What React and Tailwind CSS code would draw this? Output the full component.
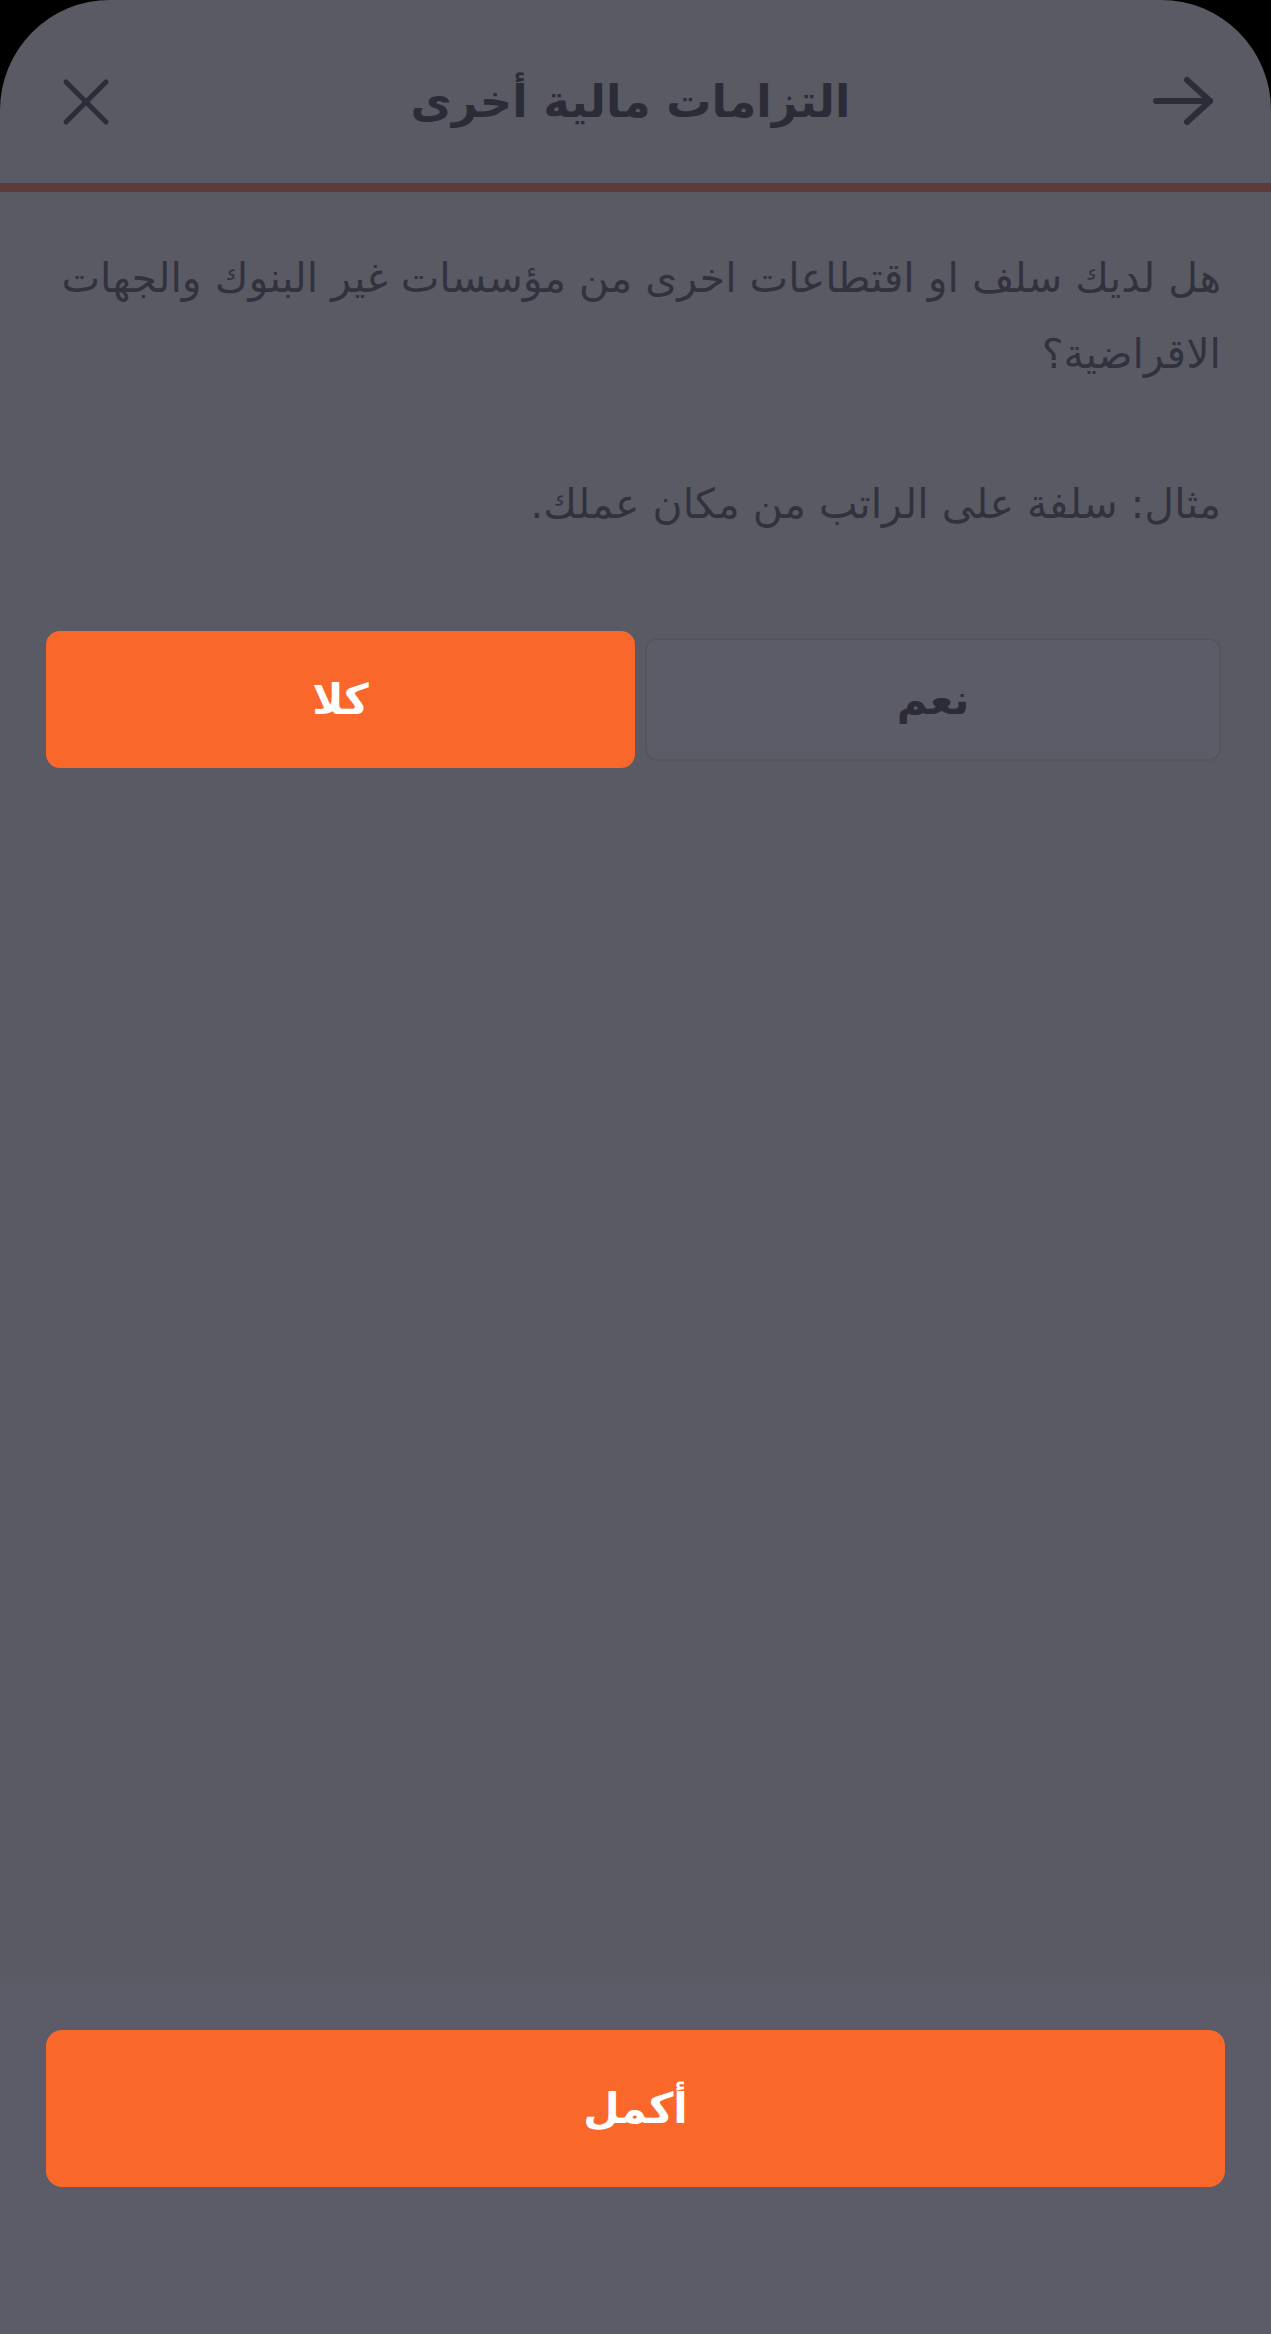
import React, { useState } from "react";

const font = { fontFamily: '"DejaVu Sans", "Noto Sans", sans-serif' };

const ArrowIcon = () => (
  <svg width="64" height="52" viewBox="0 0 64 52" fill="none" stroke="#2d2d39" strokeWidth="6" strokeLinecap="round" strokeLinejoin="round">
    <path d="M5 25h54" />
    <path d="M36 4l23 21-23 21" />
  </svg>
);

const CloseIcon = () => (
  <svg width="48" height="48" viewBox="0 0 48 48" fill="none" stroke="#2d2d39" strokeWidth="5" strokeLinecap="round">
    <path d="M4 4l40 40" />
    <path d="M44 4L4 44" />
  </svg>
);

const App = () => {
  const [answer, setAnswer] = useState("no");

  const selected = "h-[137px] rounded-[14px] bg-[#f9672a] text-white text-[42px] font-bold";
  const idle = "h-[123px] rounded-[12px] bg-[#5c5c68] border-2 border-[#55555f] text-[#2c2c38] text-[42px] font-bold";

  return (
    <div dir="rtl" className="w-full min-h-[2334px] bg-black" style={font}>
      <div className="h-[2334px] bg-[#5a5a65] rounded-t-[110px] flex flex-col overflow-hidden">
        <header className="h-[183px] pt-[20px] pr-[56px] pl-[62px] flex items-center justify-between">
          <button className="w-[64px] h-[52px] flex items-center justify-center">
            <ArrowIcon />
          </button>
          <h1 className="text-[45px] font-bold text-[#2c2c38]">التزامات مالية أخرى</h1>
          <button className="w-[48px] h-[48px] flex items-center justify-center">
            <CloseIcon />
          </button>
        </header>
        <div className="h-[9px] bg-[#5c3b3a]" />

        <main className="flex-1 px-[50px] pt-[48px]">
          <p className="text-[41px] leading-[76px] text-[#32323e]">
            هل لديك سلف او اقتطاعات اخرى من مؤسسات غير البنوك والجهات الاقراضية؟
          </p>
          <p className="mt-[74px] text-[41px] leading-[76px] text-[#32323e]">
            مثال: سلفة على الراتب من مكان عملك.
          </p>

          <div className="mt-[89px] -ml-[4px] flex items-center gap-[8px]">
            <button
              onClick={() => setAnswer("yes")}
              className={answer === "yes" ? "w-[589px] " + selected : "flex-1 ml-[2px] " + idle}
            >
              نعم
            </button>
            <button
              onClick={() => setAnswer("no")}
              className={answer === "no" ? "w-[589px] " + selected : "flex-1 " + idle}
            >
              كلا
            </button>
          </div>
        </main>

        <footer className="h-[351px] bg-[#5c5c68] px-[46px] pt-[47px]">
          <button className="w-full h-[157px] rounded-[16px] bg-[#f9672a] text-white text-[42px] font-bold">
            أكمل
          </button>
        </footer>
      </div>
    </div>
  );
};

export default App;
